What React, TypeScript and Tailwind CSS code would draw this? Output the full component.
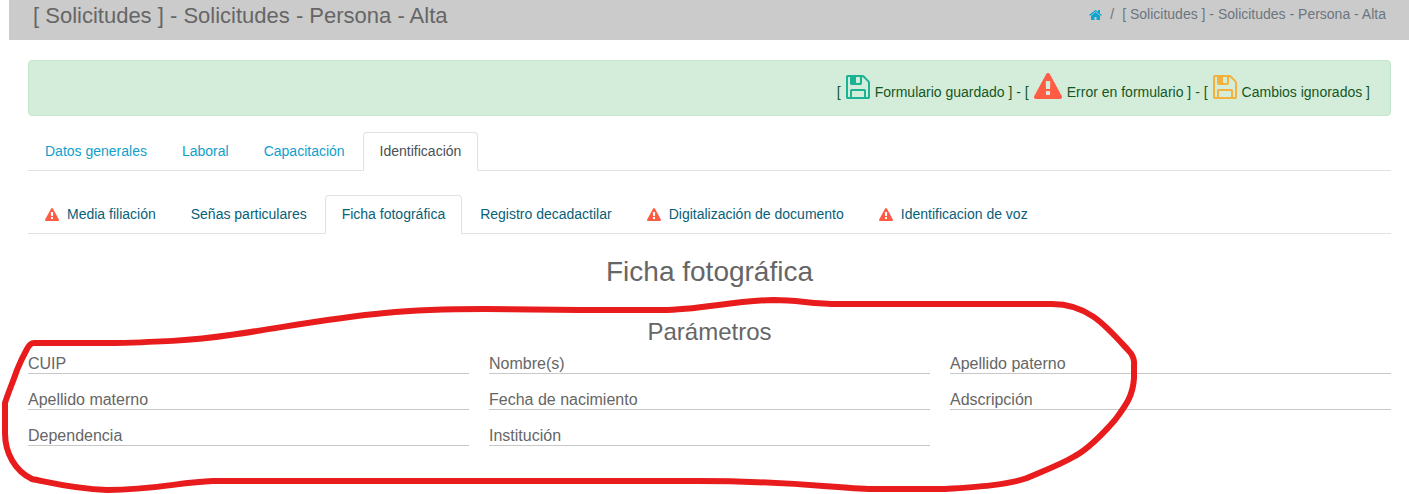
import { useState } from "react";

const iconPaths = {
  home: "M1472 992v480q0 26-19 45t-45 19h-384v-384h-256v384h-384q-26 0-45-19t-19-45v-480q0-1 .5-3t.5-3l575-474 575 474q1 2 1 6zm223-69l-62 74q-8 9-21 11h-3q-13 0-21-7l-692-577-692 577q-12 8-24 7-13-2-21-11l-62-74q-8-10-7-23.5t11-21.5l719-599q32-26 76-26t76 26l244 204v-195q0-14 9-23t23-9h192q14 0 23 9t9 23v408l219 182q10 8 11 21.5t-7 23.5z",
  save: "M512 1536h768v-384h-768v384zm896 0h128v-896q0-14-10-38.5t-20-34.5l-281-281q-10-10-34-20t-39-10v416q0 40-28 68t-68 28h-576q-40 0-68-28t-28-68v-416h-128v1280h128v-416q0-40 28-68t68-28h832q40 0 68 28t28 68v416zm-384-928v-320q0-13-9.5-22.5t-22.5-9.5h-192q-13 0-22.5 9.5t-9.5 22.5v320q0 13 9.5 22.5t22.5 9.5h192q13 0 22.5-9.5t9.5-22.5zm640 32v928q0 40-28 68t-68 28h-1344q-40 0-68-28t-28-68v-1344q0-40 28-68t68-28h928q40 0 88 20t76 48l280 280q28 28 48 76t20 88z",
  warning:
    "M1024 1375v-190q0-14-9.5-23.5t-22.5-9.5h-192q-13 0-22.5 9.5t-9.5 23.5v190q0 14 9.5 23.5t22.5 9.5h192q13 0 22.5-9.5t9.5-23.5zm-2-374l18-459q0-12-10-19-13-11-24-11h-220q-11 0-24 11-10 7-10 21l17 457q0 10 10 16.5t24 6.5h185q14 0 23.5-6.5t10.5-16.5zm-14-934l768 1408q35 63-2 126-17 29-46.5 46t-63.5 17h-1536q-34 0-63.5-17t-46.5-46q-37-63-2-126l768-1408q17-31 47-49t65-18 65 18 47 49z",
};

type IconProps = {
  name: keyof typeof iconPaths;
  viewBox: string;
  className: string;
};

function Icon({ name, viewBox, className }: IconProps) {
  return (
    <svg viewBox={viewBox} className={className} fill="currentColor" aria-hidden="true">
      <path d={iconPaths[name]} />
    </svg>
  );
}

type Tab = { label: string; warning?: boolean };

const mainTabs: Tab[] = [
  { label: "Datos generales" },
  { label: "Laboral" },
  { label: "Capacitación" },
  { label: "Identificación" },
];

const subTabs: Tab[] = [
  { label: "Media filiación", warning: true },
  { label: "Señas particulares" },
  { label: "Ficha fotográfica" },
  { label: "Registro decadactilar" },
  { label: "Digitalización de documento", warning: true },
  { label: "Identificacion de voz", warning: true },
];

const fields = [
  { id: "cuip", label: "CUIP" },
  { id: "nombre", label: "Nombre(s)" },
  { id: "paterno", label: "Apellido paterno" },
  { id: "materno", label: "Apellido materno" },
  { id: "nacimiento", label: "Fecha de nacimiento" },
  { id: "adscripcion", label: "Adscripción" },
  { id: "dependencia", label: "Dependencia" },
  { id: "institucion", label: "Institución" },
];

type TabBarProps = {
  tabs: Tab[];
  initial: number;
  linkClass: string;
  activeClass: string;
  className: string;
};

function TabBar({ tabs, initial, linkClass, activeClass, className }: TabBarProps) {
  const [active, setActive] = useState(initial);
  return (
    <div role="tablist" className={`flex flex-wrap gap-px border-b border-[#dee2e6] ${className}`}>
      {tabs.map((tab, i) => (
        <button
          key={tab.label}
          type="button"
          role="tab"
          aria-selected={i === active}
          onClick={() => setActive(i)}
          className={`-mb-px flex items-center gap-2 rounded-t border px-4 py-2 text-sm leading-[21px] ${
            i === active
              ? `border-[#dee2e6] border-b-white bg-white ${activeClass}`
              : `border-transparent ${linkClass}`
          }`}
        >
          {tab.warning && (
            <Icon name="warning" viewBox="0 0 1792 1664" className="h-[13px] w-3.5 text-[#ff5c45]" />
          )}
          {tab.label}
        </button>
      ))}
    </div>
  );
}

export default function App() {
  return (
    <div className="relative min-h-screen overflow-hidden bg-white font-['Liberation_Sans',Arial,sans-serif] text-[#676a6c]">
      <header className="ml-[9px] flex h-10 items-start justify-between bg-[#cbcbcb] pr-[23px] pl-6">
        <h1 className="pt-1 text-[22px] leading-6 text-[#666]">
          [ Solicitudes ] - Solicitudes - Persona - Alta
        </h1>
        <nav aria-label="Ruta" className="flex items-center gap-2 pt-1 text-sm leading-[21px] text-[#6c757d]">
          <a href="#inicio" aria-label="Inicio" className="text-[#0ea5cf]">
            <Icon name="home" viewBox="64 128 1664 1536" className="h-3 w-[13px]" />
          </a>
          <span>/</span>
          <span>[ Solicitudes ] - Solicitudes - Persona - Alta</span>
        </nav>
      </header>

      <main className="px-7 pt-5 pr-[18px]">
        <div
          role="status"
          className="flex h-14 items-end justify-end gap-[5px] rounded border border-[#c3e6cb] bg-[#d4edda] px-5 pb-3 text-sm leading-[21px] text-[#155724]"
        >
          <span>[</span>
          <Icon name="save" viewBox="128 128 1536 1536" className="mb-1 size-6 text-[#1ab394]" />
          <span>Formulario guardado ] - [</span>
          <Icon name="warning" viewBox="0 0 1792 1664" className="mb-1 h-[26px] w-7 text-[#ff5c45]" />
          <span>Error en formulario ] - [</span>
          <Icon name="save" viewBox="128 128 1536 1536" className="mb-1 size-6 text-[#f4b23c]" />
          <span>Cambios ignorados ]</span>
        </div>

        <TabBar
          tabs={mainTabs}
          initial={3}
          linkClass="text-[#0f9fca]"
          activeClass="text-[#495057]"
          className="mt-4"
        />
        <TabBar
          tabs={subTabs}
          initial={2}
          linkClass="text-[#086079]"
          activeClass="text-[#086079]"
          className="mt-6"
        />

        <section>
          <h2 className="mt-5 text-center text-[28px] leading-9 text-[#666]">Ficha fotográfica</h2>
          <h3 className="mt-[26px] text-center text-2xl leading-8 text-[#666]">Parámetros</h3>
          <form className="mt-1 grid grid-cols-3 gap-x-5 gap-y-3.5">
            {fields.map((field) => (
              <div key={field.id} className="flex h-[22px] border-b border-[#c8c8c8] text-base">
                <label htmlFor={field.id} className="shrink-0 leading-[23px] text-[#666]">
                  {field.label}
                </label>
                <input id={field.id} type="text" className="min-w-0 flex-1 bg-transparent pl-2 outline-none" />
              </div>
            ))}
          </form>
        </section>
      </main>

      <svg
        viewBox="0 0 1409 494"
        className="pointer-events-none absolute top-0 left-0 h-[494px] w-[1409px] max-w-none"
        fill="none"
        stroke="#e81c1c"
        strokeWidth="6"
        strokeLinejoin="round"
        aria-hidden="true"
      >
        <path d="M34 343H115C155 342 190 341 230 335C280 328 330 318 385 313C415 310 445 309 485 309L580 310H662C700 310 730 301 773 300C800 300 810 304 840 304H1052C1088 304 1106 326 1128 350Q1135 357 1134 365V378C1133 395 1127 404 1115 420C1101 436 1088 449 1075 456C1060 465 1043 471 1027 478C1008 485 977 487 945 489H873C830 488 795 481 697 481H213C180 482 155 490 107 490C75 489 52 483 32 479C15 471 5 453 5 433V403C8 393 13 382 17 370Q21 360 27 349Q30 343 34 343Z" />
      </svg>
    </div>
  );
}
